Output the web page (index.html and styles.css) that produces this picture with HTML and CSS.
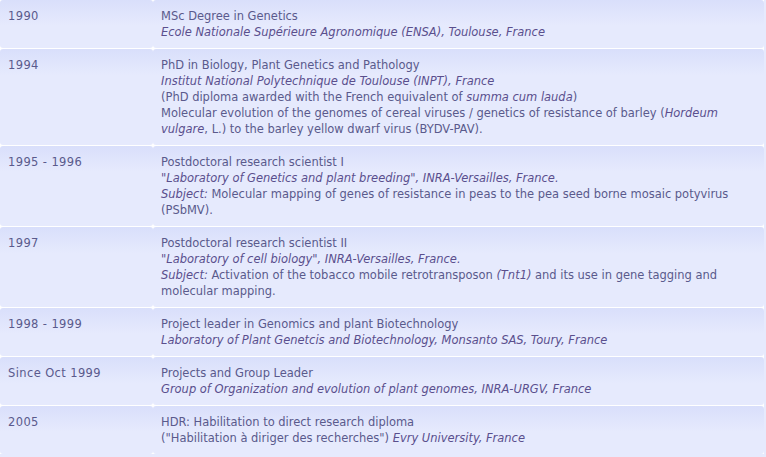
FILE: index.html
```html
<!DOCTYPE html>
<html>
<head>
<meta charset="utf-8">
<link rel="stylesheet" href="styles.css">
</head>
<body>
<div class="cv">
  <div class="row">
    <div class="date">1990</div>
    <div class="desc">MSc Degree in Genetics<br><em>Ecole Nationale Supérieure Agronomique (ENSA), Toulouse, France</em></div>
  </div>
  <div class="row">
    <div class="date">1994</div>
    <div class="desc">PhD in Biology, Plant Genetics and Pathology<br><em>Institut National Polytechnique de Toulouse (INPT), France</em><br>(PhD diploma awarded with the French equivalent of <em>summa cum lauda</em>)<br>Molecular evolution of the genomes of cereal viruses / genetics of resistance of barley (<em>Hordeum vulgare</em>, L.) to the barley yellow dwarf virus (BYDV-PAV).</div>
  </div>
  <div class="row">
    <div class="date">1995 - 1996</div>
    <div class="desc">Postdoctoral research scientist I<br><em>"Laboratory of Genetics and plant breeding", INRA-Versailles, France.</em><br><em>Subject:</em> Molecular mapping of genes of resistance in peas to the pea seed borne mosaic potyvirus (PSbMV).</div>
  </div>
  <div class="row">
    <div class="date">1997</div>
    <div class="desc">Postdoctoral research scientist II<br><em>"Laboratory of cell biology", INRA-Versailles, France.</em><br><em>Subject:</em> Activation of the tobacco mobile retrotransposon <em>(Tnt1)</em> and its use in gene tagging and molecular mapping.</div>
  </div>
  <div class="row">
    <div class="date">1998 - 1999</div>
    <div class="desc">Project leader in Genomics and plant Biotechnology<br><em>Laboratory of Plant Genetcis and Biotechnology, Monsanto SAS, Toury, France</em></div>
  </div>
  <div class="row">
    <div class="date">Since Oct 1999</div>
    <div class="desc">Projects and Group Leader<br><em>Group of Organization and evolution of plant genomes, INRA-URGV, France</em></div>
  </div>
  <div class="row">
    <div class="date">2005</div>
    <div class="desc">HDR: Habilitation to direct research diploma<br>("Habilitation à diriger des recherches") <em>Evry University, France</em></div>
  </div>
</div>
</body>
</html>
```

FILE: styles.css
```css
html, body {
  margin: 0;
  padding: 0;
  background: #e6eafd;
}
.cv {
  width: 764px;
  display: flex;
  flex-direction: column;
  gap: 1px;
  background: #ffffff;
  font-family: "DejaVu Sans Condensed", "DejaVu Sans", sans-serif;
  font-size: 12.75px;
  line-height: 16px;
  color: #5a5a8c;
}
.row {
  display: grid;
  grid-template-columns: 153px 1fr;
}
.date, .desc {
  padding: 8px;
  background: linear-gradient(#d9dffb, #e6eafd 26px);
  border-radius: 3px;
}
.date {
  letter-spacing: 0.4px;
}
.desc {
  padding-right: 20px;
}
em {
  font-style: italic;
  color: #5a4f8d;
}
```
